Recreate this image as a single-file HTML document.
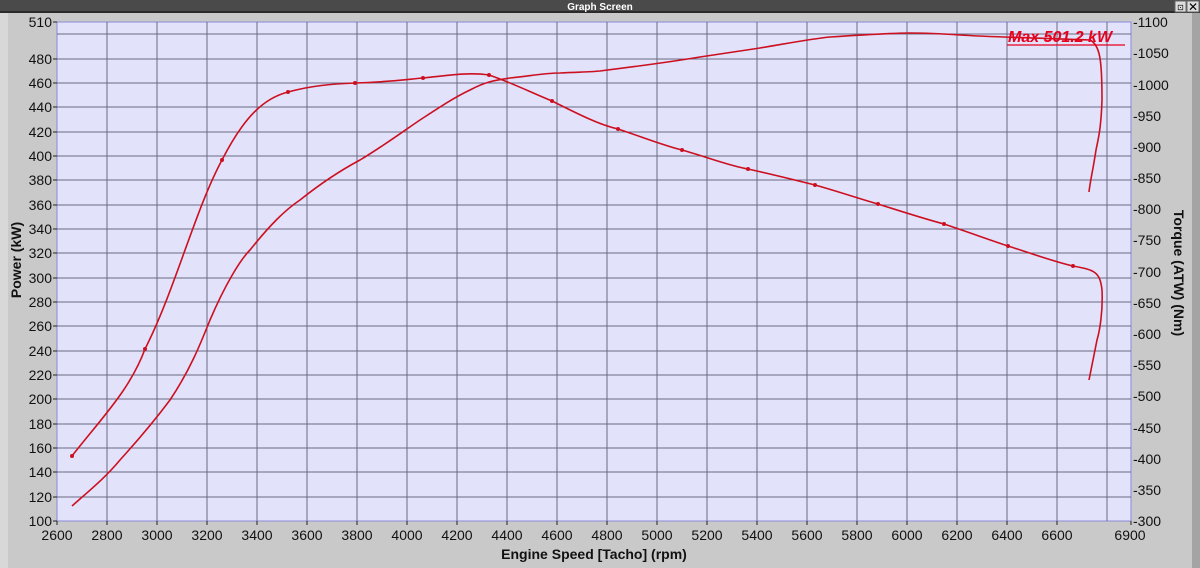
<!DOCTYPE html>
<html><head><meta charset="utf-8"><style>
html,body{margin:0;padding:0;width:1200px;height:568px;overflow:hidden;background:#c8c8c8;font-family:"Liberation Sans",Arial,sans-serif}
</style></head><body>
<svg width="1200" height="568" xmlns="http://www.w3.org/2000/svg" font-family="Liberation Sans, Arial, sans-serif">
<rect width="1200" height="568" fill="#c9c9c9"/>
<rect x="0" y="13" width="8" height="555" fill="#d8d8d8"/>
<rect x="1192" y="13" width="8" height="555" fill="#a4a4a4"/>
<rect x="0" y="0" width="1200" height="13" fill="#4a4a4a"/>
<rect x="0" y="11" width="1200" height="2" fill="#2a2a2a"/>
<text x="600" y="10" font-size="10" font-weight="bold" fill="#fff" text-anchor="middle">Graph Screen</text>
<rect x="1175" y="1" width="11" height="11" fill="#ddd" stroke="#666"/>
<text x="1180.5" y="10" font-size="8" text-anchor="middle" fill="#000">⊡</text>
<rect x="1187" y="1" width="12" height="11" fill="#ddd" stroke="#666"/>
<text x="1193" y="11" font-size="12" text-anchor="middle" fill="#000">✕</text>
<rect x="57" y="22" width="1074" height="499" fill="#e2e2fb" stroke="#8a8ad8"/>
<g stroke="#6a6a80" stroke-width="1">
<line x1="107" y1="22" x2="107" y2="521"/><line x1="157" y1="22" x2="157" y2="521"/><line x1="207" y1="22" x2="207" y2="521"/><line x1="257" y1="22" x2="257" y2="521"/><line x1="307" y1="22" x2="307" y2="521"/><line x1="357" y1="22" x2="357" y2="521"/><line x1="407" y1="22" x2="407" y2="521"/><line x1="457" y1="22" x2="457" y2="521"/><line x1="507" y1="22" x2="507" y2="521"/><line x1="557" y1="22" x2="557" y2="521"/><line x1="607" y1="22" x2="607" y2="521"/><line x1="657" y1="22" x2="657" y2="521"/><line x1="707" y1="22" x2="707" y2="521"/><line x1="757" y1="22" x2="757" y2="521"/><line x1="807" y1="22" x2="807" y2="521"/><line x1="857" y1="22" x2="857" y2="521"/><line x1="907" y1="22" x2="907" y2="521"/><line x1="957" y1="22" x2="957" y2="521"/><line x1="1007" y1="22" x2="1007" y2="521"/><line x1="1057" y1="22" x2="1057" y2="521"/><line x1="1107" y1="22" x2="1107" y2="521"/>
<line x1="57" y1="34" x2="1131" y2="34"/><line x1="57" y1="59" x2="1131" y2="59"/><line x1="57" y1="83" x2="1131" y2="83"/><line x1="57" y1="107" x2="1131" y2="107"/><line x1="57" y1="132" x2="1131" y2="132"/><line x1="57" y1="156" x2="1131" y2="156"/><line x1="57" y1="180" x2="1131" y2="180"/><line x1="57" y1="205" x2="1131" y2="205"/><line x1="57" y1="229" x2="1131" y2="229"/><line x1="57" y1="253" x2="1131" y2="253"/><line x1="57" y1="278" x2="1131" y2="278"/><line x1="57" y1="302" x2="1131" y2="302"/><line x1="57" y1="326" x2="1131" y2="326"/><line x1="57" y1="351" x2="1131" y2="351"/><line x1="57" y1="375" x2="1131" y2="375"/><line x1="57" y1="399" x2="1131" y2="399"/><line x1="57" y1="424" x2="1131" y2="424"/><line x1="57" y1="448" x2="1131" y2="448"/><line x1="57" y1="472" x2="1131" y2="472"/><line x1="57" y1="497" x2="1131" y2="497"/>
</g>
<g stroke="#222" stroke-width="1">
<line x1="53" y1="22" x2="57" y2="22"/><line x1="53" y1="59" x2="57" y2="59"/><line x1="53" y1="83" x2="57" y2="83"/><line x1="53" y1="107" x2="57" y2="107"/><line x1="53" y1="132" x2="57" y2="132"/><line x1="53" y1="156" x2="57" y2="156"/><line x1="53" y1="180" x2="57" y2="180"/><line x1="53" y1="205" x2="57" y2="205"/><line x1="53" y1="229" x2="57" y2="229"/><line x1="53" y1="253" x2="57" y2="253"/><line x1="53" y1="278" x2="57" y2="278"/><line x1="53" y1="302" x2="57" y2="302"/><line x1="53" y1="326" x2="57" y2="326"/><line x1="53" y1="351" x2="57" y2="351"/><line x1="53" y1="375" x2="57" y2="375"/><line x1="53" y1="399" x2="57" y2="399"/><line x1="53" y1="424" x2="57" y2="424"/><line x1="53" y1="448" x2="57" y2="448"/><line x1="53" y1="472" x2="57" y2="472"/><line x1="53" y1="497" x2="57" y2="497"/><line x1="53" y1="521" x2="57" y2="521"/>
<line x1="57" y1="521" x2="57" y2="525"/><line x1="107" y1="521" x2="107" y2="525"/><line x1="157" y1="521" x2="157" y2="525"/><line x1="207" y1="521" x2="207" y2="525"/><line x1="257" y1="521" x2="257" y2="525"/><line x1="307" y1="521" x2="307" y2="525"/><line x1="357" y1="521" x2="357" y2="525"/><line x1="407" y1="521" x2="407" y2="525"/><line x1="457" y1="521" x2="457" y2="525"/><line x1="507" y1="521" x2="507" y2="525"/><line x1="557" y1="521" x2="557" y2="525"/><line x1="607" y1="521" x2="607" y2="525"/><line x1="657" y1="521" x2="657" y2="525"/><line x1="707" y1="521" x2="707" y2="525"/><line x1="757" y1="521" x2="757" y2="525"/><line x1="807" y1="521" x2="807" y2="525"/><line x1="857" y1="521" x2="857" y2="525"/><line x1="907" y1="521" x2="907" y2="525"/><line x1="957" y1="521" x2="957" y2="525"/><line x1="1007" y1="521" x2="1007" y2="525"/><line x1="1057" y1="521" x2="1057" y2="525"/><line x1="1131" y1="521" x2="1131" y2="525"/>
</g>
<g font-size="14" fill="#111" text-anchor="end">
<text x="52" y="27">510</text><text x="52" y="64">480</text><text x="52" y="88">460</text><text x="52" y="112">440</text><text x="52" y="137">420</text><text x="52" y="161">400</text><text x="52" y="185">380</text><text x="52" y="210">360</text><text x="52" y="234">340</text><text x="52" y="258">320</text><text x="52" y="283">300</text><text x="52" y="307">280</text><text x="52" y="331">260</text><text x="52" y="356">240</text><text x="52" y="380">220</text><text x="52" y="404">200</text><text x="52" y="429">180</text><text x="52" y="453">160</text><text x="52" y="477">140</text><text x="52" y="502">120</text><text x="52" y="526">100</text>
</g>
<g font-size="14" fill="#111" text-anchor="start">
<text x="1133" y="27">-1100</text><text x="1133" y="58">-1050</text><text x="1133" y="90">-1000</text><text x="1133" y="121">-950</text><text x="1133" y="152">-900</text><text x="1133" y="183">-850</text><text x="1133" y="214">-800</text><text x="1133" y="245">-750</text><text x="1133" y="277">-700</text><text x="1133" y="308">-650</text><text x="1133" y="339">-600</text><text x="1133" y="370">-550</text><text x="1133" y="401">-500</text><text x="1133" y="433">-450</text><text x="1133" y="464">-400</text><text x="1133" y="495">-350</text><text x="1133" y="526">-300</text>
</g>
<g font-size="14" fill="#111" text-anchor="middle">
<text x="57" y="540">2600</text><text x="107" y="540">2800</text><text x="157" y="540">3000</text><text x="207" y="540">3200</text><text x="257" y="540">3400</text><text x="307" y="540">3600</text><text x="357" y="540">3800</text><text x="407" y="540">4000</text><text x="457" y="540">4200</text><text x="507" y="540">4400</text><text x="557" y="540">4600</text><text x="607" y="540">4800</text><text x="657" y="540">5000</text><text x="707" y="540">5200</text><text x="757" y="540">5400</text><text x="807" y="540">5600</text><text x="857" y="540">5800</text><text x="907" y="540">6000</text><text x="957" y="540">6200</text><text x="1007" y="540">6400</text><text x="1057" y="540">6600</text><text x="1130" y="540">6900</text>
</g>
<text x="594" y="559" font-size="14" font-weight="bold" text-anchor="middle" fill="#111">Engine Speed [Tacho] (rpm)</text>
<text transform="translate(21,260) rotate(-90)" font-size="14" font-weight="bold" text-anchor="middle" fill="#111">Power (kW)</text>
<text transform="translate(1174,273) rotate(90)" font-size="14" font-weight="bold" text-anchor="middle" fill="#111">Torque (ATW) (Nm)</text>
<g fill="none" stroke="#cc1020" stroke-width="1.6" stroke-linejoin="round">
<path d="M72,456 C100,420 130,390 145,349 C175,290 195,210 222,160 C245,115 265,98 288,92 C310,86 330,84 355,83 C390,82 410,79 423,78 C450,75 470,72 489,75 C510,82 530,92 552,101 C580,115 600,125 618,129 C645,138 665,146 682,150 C710,158 730,166 748,169 C775,175 795,180 815,185 C840,192 860,199 878,204 C900,211 925,219 944,224 C965,231 990,240 1008,246 C1030,253 1055,262 1073,266 C1095,270 1100,272 1102,290 C1103,310 1100,330 1097,340 C1094,355 1091,370 1089,380"/>
<path d="M72,506 C90,490 105,478 120,460 C140,438 155,420 170,400 C190,370 200,345 210,320 C225,285 240,260 250,250 C270,225 285,210 300,200 C325,180 345,168 360,160 C385,145 405,130 420,120 C440,107 455,97 470,90 C485,82 495,80 510,78 C530,76 545,73 560,73 C580,72 590,72 600,71 C640,66 670,62 700,57 C720,54 740,51 760,48 C790,43 810,39 830,37 C860,35 890,33 910,33 C930,33 945,34 960,35 C990,37 1040,38 1090,40 C1100,45 1102,60 1102,100 C1101,130 1098,140 1096,150 C1093,170 1090,182 1089,192"/>
</g>
<g fill="#cc1020">
<circle cx="72" cy="456" r="2"/><circle cx="145" cy="349" r="2"/><circle cx="222" cy="160" r="2"/><circle cx="288" cy="92" r="2"/><circle cx="355" cy="83" r="2"/><circle cx="423" cy="78" r="2"/><circle cx="489" cy="75" r="2"/><circle cx="552" cy="101" r="2"/><circle cx="618" cy="129" r="2"/><circle cx="682" cy="150" r="2"/><circle cx="748" cy="169" r="2"/><circle cx="815" cy="185" r="2"/><circle cx="878" cy="204" r="2"/><circle cx="944" cy="224" r="2"/><circle cx="1008" cy="246" r="2"/><circle cx="1073" cy="266" r="2"/>
</g>
<text x="1008" y="42" font-size="16" font-weight="bold" font-style="italic" fill="#e8001c">Max 501.2 kW</text>
<line x1="1007" y1="45" x2="1125" y2="45" stroke="#e8001c" stroke-width="1.2"/>
</svg>
</body></html>
